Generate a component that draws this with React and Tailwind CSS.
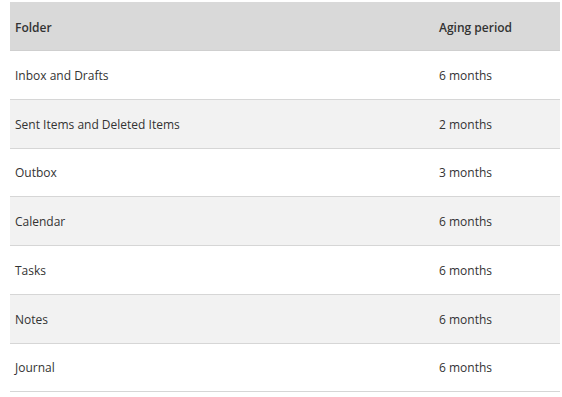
const rows = [
  ["Inbox and Drafts", "6 months"],
  ["Sent Items and Deleted Items", "2 months"],
  ["Outbox", "3 months"],
  ["Calendar", "6 months"],
  ["Tasks", "6 months"],
  ["Notes", "6 months"],
  ["Journal", "6 months"],
];

export default function App() {
  return (
    <div className="w-[562px] h-[397px] bg-white pt-[2px] pl-[10px] pr-[2px] text-[12px] text-[#333]" style={{ fontFamily: '"Open Sans", "Noto Sans", sans-serif' }}>
      <div className="grid grid-cols-[424px_1fr] h-[49px] items-center pt-[3px] bg-[#d9d9d9] border-b border-[#cfcfcf] font-semibold">
        <div className="pl-[5px]">Folder</div>
        <div className="pl-[5px]">Aging period</div>
      </div>
      {rows.map(([folder, period], i) => (
        <div
          key={folder}
          className={`grid grid-cols-[424px_1fr] h-[48.75px] items-center pt-[2px] border-b border-[#d6d6d6] ${i % 2 === 1 ? "bg-[#f2f2f2]" : "bg-white"}`}
        >
          <div className="pl-[5px]">{folder}</div>
          <div className="pl-[5px]">{period}</div>
        </div>
      ))}
    </div>
  );
}
